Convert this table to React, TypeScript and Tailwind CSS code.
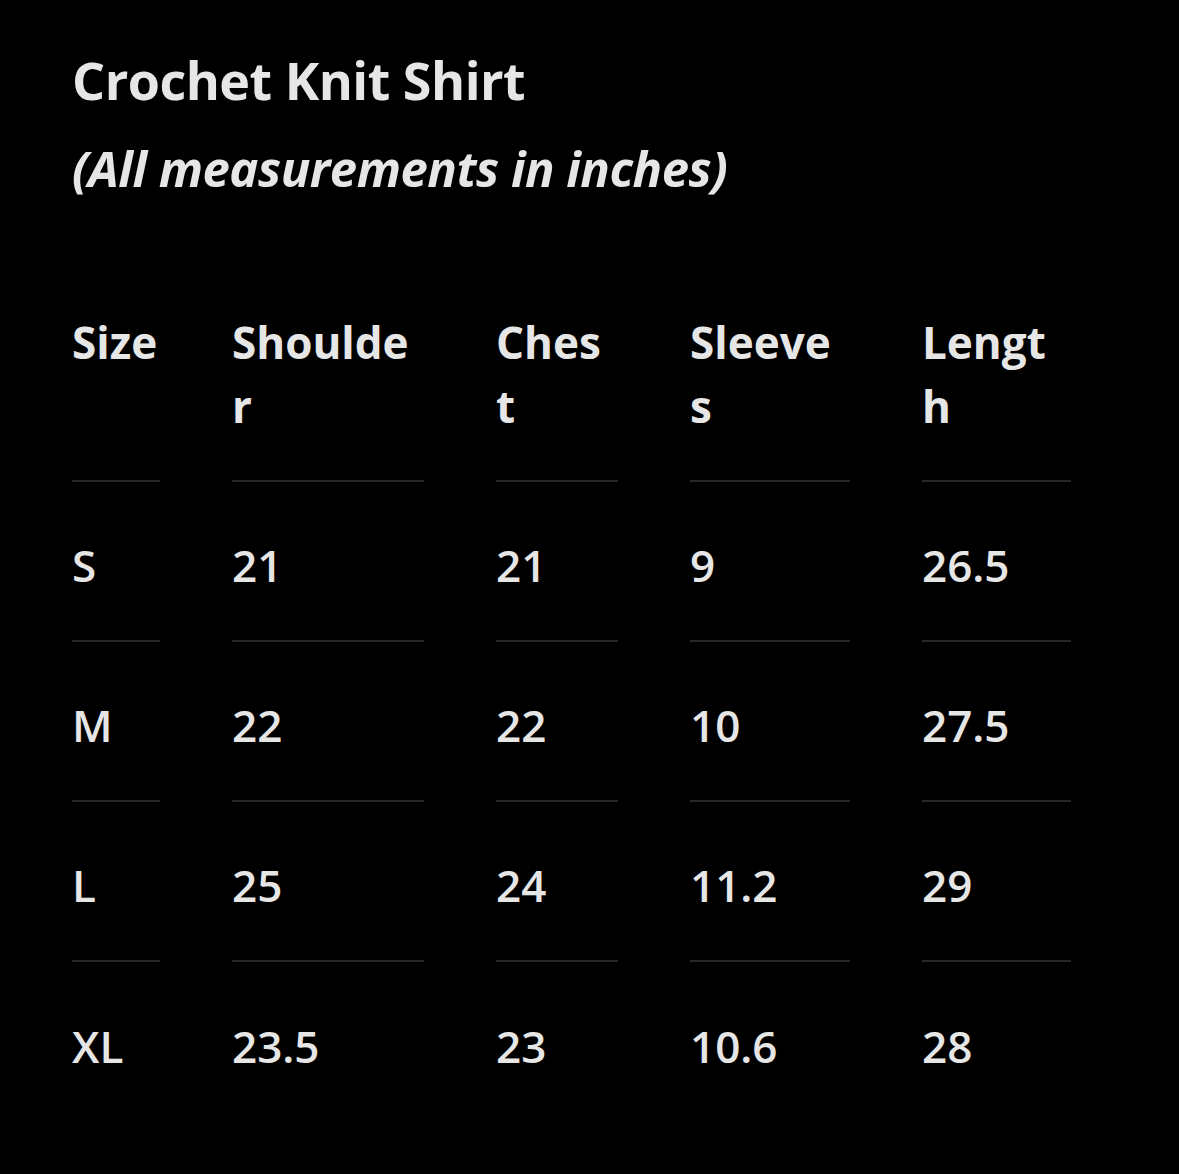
import React from "react";

const headers: string[][] = [
  ["Size"],
  ["Shoulde", "r"],
  ["Ches", "t"],
  ["Sleeve", "s"],
  ["Lengt", "h"],
];

const rows: string[][] = [
  ["S", "21", "21", "9", "26.5"],
  ["M", "22", "22", "10", "27.5"],
  ["L", "25", "24", "11.2", "29"],
  ["XL", "23.5", "23", "10.6", "28"],
];

export default function App() {
  return (
    <div
      className="min-h-[1174px] w-full bg-black text-[#e6e6e6] pl-[72px] pt-[42px]"
      style={{ fontFamily: '"Open Sans", "Noto Sans", sans-serif' }}
    >
      <h1 className="text-[52px] leading-[76px] font-bold tracking-[-0.5px]">Crochet Knit Shirt</h1>
      <p className="mt-[20px] text-[49px] leading-[60px] font-bold italic tracking-[-0.5px]">
        (All measurements in inches)
      </p>
      <div className="mt-[112px] grid grid-cols-[88px_192px_122px_160px_149px] gap-x-[72px]">
        {headers.map((h, i) => (
          <div key={i} className="border-b-2 border-[#262626] pb-[42px] text-[44px] leading-[64px] font-bold">
            {h.map((l, j) => (
              <div key={j}>{l}</div>
            ))}
          </div>
        ))}
        {rows.map((r, ri) =>
          r.map((c, ci) => (
            <div
              key={`${ri}-${ci}`}
              className={`flex h-[160px] items-center pt-[8px] text-[44px] font-semibold ${
                ri < rows.length - 1 ? "border-b-2 border-[#262626]" : ""
              }`}
            >
              {c}
            </div>
          ))
        )}
      </div>
    </div>
  );
}
